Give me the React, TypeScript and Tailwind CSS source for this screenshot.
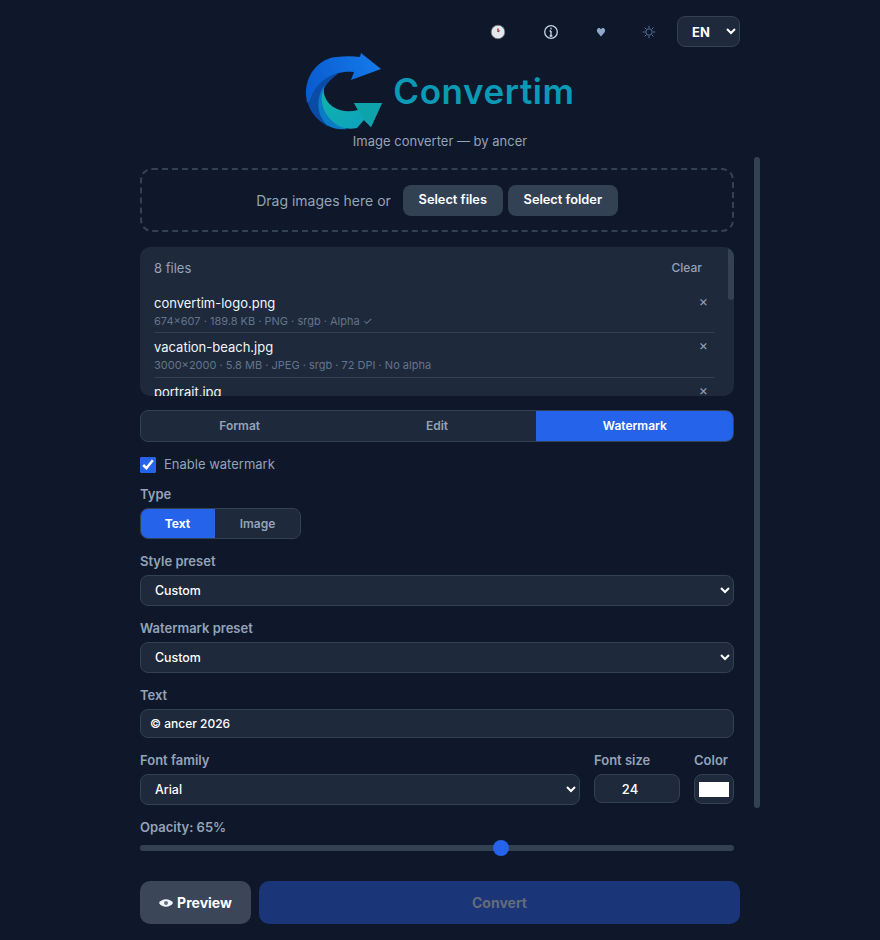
import React from "react";

const files = [
  ["convertim-logo.png", "674×607 · 189.8 KB · PNG · srgb · Alpha ✓"],
  ["vacation-beach.jpg", "3000×2000 · 5.8 MB · JPEG · srgb · 72 DPI · No alpha"],
  ["portrait.jpg", "2400×3200 · 3.1 MB · JPEG · srgb · 72 DPI · No alpha"],
  ["product-shot.png", "1600×1600 · 1.2 MB · PNG · srgb · Alpha ✓"],
  ["screenshot.png", "1920×1080 · 842.5 KB · PNG · srgb · No alpha"],
  ["banner.webp", "1200×400 · 96.4 KB · WEBP · srgb · No alpha"],
  ["icon.gif", "256×256 · 24.1 KB · GIF · srgb · Alpha ✓"],
  ["scan.tiff", "2480×3508 · 9.4 MB · TIFF · srgb · 300 DPI · No alpha"],
];

function Label({ children }: { children: React.ReactNode }) {
  return <div className="text-[13px] leading-[16px] font-semibold text-[#94a3b8]">{children}</div>;
}

function Sel({ value }: { value: string }) {
  return (
    <select
      defaultValue={value}
      className="h-[31px] w-full rounded-[8px] border border-[#334155] bg-[#1e293b] pl-[10px] pr-[6px] text-[12.4px] font-medium text-white outline-none"
    >
      <option>{value}</option>
    </select>
  );
}

function Logo() {
  return (
    <svg width="80" height="78" viewBox="0 0 80 78" className="shrink-0">
      <defs>
        <linearGradient id="a" x1="0" y1="0.6" x2="1" y2="0.3">
          <stop offset="0" stopColor="#0a5ccf" />
          <stop offset="1" stopColor="#1479ea" />
        </linearGradient>
        <linearGradient id="b" x1="0" y1="0" x2="1" y2="1">
          <stop offset="0" stopColor="#12b3a8" />
          <stop offset="1" stopColor="#0b9fc2" />
        </linearGradient>
      </defs>
      <path d="M30 20C14 24 4 34 2 45C3 55 9 66 24 74C14 62 12 46 20 34C23 29 27 25 33 21Z" fill="#0a4ba6" />
      <path d="M19 33C12 44 10 60 22 72C28 76 35 77 42 76C28 70 18 52 19 33Z" fill="#0a7cc6" />
      <path d="M1 42C0 22 14 5 32 4C40 3 48 3 55 4L56 0L76 16L46 27L49 19C32 17 12 25 5 47L2 50Z" fill="url(#a)" />
      <path d="M18 38C14 50 20 66 36 74C41 76 47 76 52 75L59 67L66 74L77 50L49 50L53 57C38 61 22 56 18 38Z" fill="url(#b)" />
      <path d="M49 50L77 50L66 74L59 67L53 57Z" fill="#0ea3ab" />
    </svg>
  );
}

export default function App() {
  return (
    <div className="flex h-[940px] flex-col overflow-hidden bg-[#0f172a] pl-[140px] font-['Inter','Liberation_Sans',sans-serif]">
      <div className="flex h-[48px] w-[600px] shrink-0 items-start justify-end pt-[16px]">
        <div className="flex h-[31px] items-center">
          <svg width="16" height="16" viewBox="0 0 16 16">
            <circle cx="8" cy="8" r="6.8" fill="#e5e7eb" />
            <circle cx="8" cy="8" r="6.8" fill="none" stroke="#6b7280" strokeWidth="0.8" />
            <path d="M8 8V4.5" stroke="#b91c3c" strokeWidth="1.4" />
            <path d="M8 8L10 6.5" stroke="#374151" strokeWidth="0.8" />
          </svg>
          <svg className="ml-[37px]" width="16" height="16" viewBox="0 0 16 16" fill="none">
            <circle cx="8" cy="8" r="6.3" stroke="#c3d4e8" strokeWidth="1.3" />
            <path d="M8 7v5M6.6 7H8M6.6 12h2.8M8 3.8v1.6" stroke="#d6e2f0" strokeWidth="1.3" />
          </svg>
          <svg className="ml-[34px]" width="16" height="10" viewBox="0 0 16 10">
            <path d="M8 9.5L4.4 5.3C3.2 3.6 4.2 1 6 1 7 1 7.6 1.6 8 2.4 8.4 1.6 9 1 10 1c1.8 0 2.8 2.6 1.6 4.3Z" fill="#8ea9cc" />
          </svg>
          <svg className="ml-[32px]" width="16" height="14" viewBox="0 0 16 14" fill="none" stroke="#58749a">
            <circle cx="8" cy="7" r="3.2" strokeWidth="1" />
            <path d="M8 .8v2M8 11.2v2M1.8 7h2M12.2 7h2M3.6 2.6L5 4M11 10l1.4 1.4M3.6 11.4L5 10M11 4l1.4-1.4" strokeWidth="1" />
          </svg>
          <select defaultValue="EN" className="ml-[20px] h-[31px] w-[63px] rounded-[8px] border border-[#334155] bg-[#1e293b] pl-[10px] text-[13px] font-bold text-white outline-none">
            <option>EN</option>
          </select>
        </div>
      </div>

      <div className="flex w-[600px] shrink-0 flex-col items-center">
        <div className="flex h-[85px] items-start pt-[5px]">
          <Logo />
          <span className="ml-[8px] mt-[16px] text-[35px] leading-[44px] font-semibold tracking-[0.6px] text-[#0a9ab6]">Convertim</span>
        </div>
        <div className="text-[13px] leading-[16px] text-[#94a3b8]">Image converter — by ancer</div>
      </div>

      <div className="relative mt-[8px] min-h-0 w-[620px] flex-1">
        <div className="h-full w-[594px] overflow-hidden pt-[11px]">
          <div className="flex h-[64px] items-center justify-center gap-[5px] rounded-[12px] border-2 border-dashed border-[#334155]">
            <span className="mr-[7px] text-[14px] text-[#94a3b8]">Drag images here or</span>
            <button className="h-[31px] w-[100px] rounded-[8px] bg-[#334155] text-[12.8px] font-semibold text-white">Select files</button>
            <button className="h-[31px] w-[110px] rounded-[8px] bg-[#334155] text-[12.8px] font-semibold text-white">Select folder</button>
          </div>

          <div className="relative mt-[15px] h-[149px] overflow-hidden rounded-[10px] bg-[#1e293b] pl-[14px]">
            <div className="w-[560px]">
              <div className="flex h-[41.5px] items-center justify-between pr-[12px] pt-[1px]">
                <span className="text-[13px] text-[#94a3b8]">8 files</span>
                <span className="text-[12px] font-medium text-[#94a3b8]">Clear</span>
              </div>
              {files.map(([name, meta], i) => (
                <div key={name} className={"relative h-[44.5px] pt-[4px] " + (i < files.length - 1 ? "border-b border-[#334155]" : "")}>
                  <div className="text-[13px] leading-[20px] font-normal text-[#f1f5f9]">{name}</div>
                  <div className="text-[11px] leading-[17px] text-[#64748b]">{meta}</div>
                  <span className="absolute right-[6px] top-[2px] text-[14px] leading-[20px] text-[#94a3b8]">×</span>
                </div>
              ))}
            </div>
            <div className="absolute right-0 top-0 h-[53px] w-[6px] rounded-[3px] bg-[#334155]" />
          </div>

          <div className="mt-[14px] grid h-[32px] grid-cols-3 overflow-hidden rounded-[8px] border border-[#334155] bg-[#1e293b]">
            <div className="flex items-center justify-center text-[12px] font-semibold text-[#94a3b8]">Format</div>
            <div className="flex items-center justify-center text-[12px] font-semibold text-[#94a3b8]">Edit</div>
            <div className="-my-px -mr-px flex items-center justify-center bg-[#2563eb] text-[12px] font-semibold text-white">Watermark</div>
          </div>

          <label className="mt-[14px] flex h-[18px] items-center gap-[8px]">
            <input type="checkbox" defaultChecked className="h-[16px] w-[16px] accent-[#2563eb]" />
            <span className="text-[13px] text-[#94a3b8]">Enable watermark</span>
          </label>

          <div className="mt-[12px]"><Label>Type</Label></div>
          <div className="mt-[6px] flex h-[31px] w-[161px] overflow-hidden rounded-[8px] border border-[#334155] bg-[#1e293b]">
            <div className="-my-px -ml-px flex w-[75px] items-center justify-center bg-[#2563eb] text-[12px] font-bold text-white">Text</div>
            <div className="flex flex-1 items-center justify-center text-[12px] font-semibold text-[#94a3b8]">Image</div>
          </div>

          <div className="mt-[14px]"><Label>Style preset</Label></div>
          <div className="mt-[6px]"><Sel value="Custom" /></div>

          <div className="mt-[14px]"><Label>Watermark preset</Label></div>
          <div className="mt-[6px]"><Sel value="Custom" /></div>

          <div className="mt-[14px]"><Label>Text</Label></div>
          <input
            defaultValue="© ancer 2026"
            className="mt-[6px] h-[29px] w-full rounded-[8px] border border-[#334155] bg-[#1e293b] px-[9px] text-[12px] font-medium text-white outline-none"
          />

          <div className="mt-[14px] flex gap-[14px]">
            <div className="w-[440px]">
              <Label>Font family</Label>
              <div className="mt-[6px]"><Sel value="Arial" /></div>
            </div>
            <div className="w-[86px]">
              <Label>Font size</Label>
              <input defaultValue="24" className="mt-[6px] h-[29px] w-full rounded-[8px] border border-[#334155] bg-[#1e293b] pr-[14px] text-center text-[13px] font-medium text-white outline-none" />
            </div>
            <div className="w-[40px]">
              <Label>Color</Label>
              <div className="mt-[6px] flex h-[30px] w-[40px] items-center justify-center rounded-[8px] border border-[#334155] bg-[#1e293b]">
                <div className="h-[15px] w-[30px] bg-white" />
              </div>
            </div>
          </div>

          <div className="mt-[14px]"><Label>Opacity: 65%</Label></div>
          <div className="relative mt-[10px] h-[6px] rounded-[3px] bg-[#334155]">
            <div className="absolute left-[353px] top-[-5px] h-[16px] w-[16px] rounded-full bg-[#2563eb]" />
          </div>
        </div>
        <div className="absolute left-[614px] top-0 h-[651px] w-[6px] rounded-[3px] bg-[#334155]" />
      </div>

      <div className="mb-[16px] mt-[12px] flex w-[600px] shrink-0 gap-[8px]">
        <button className="flex h-[43px] w-[111px] items-center justify-center gap-[4px] rounded-[10px] bg-[#3b4658] text-[14px] font-bold text-white">
          <svg width="14" height="8" viewBox="0 0 14 8"><path d="M0 4C3-1 11-1 14 4 11 9 3 9 0 4Z" fill="#f1f5f9" /><circle cx="7" cy="4" r="2" fill="#64748b" /></svg>
          Preview
        </button>
        <button className="h-[43px] flex-1 rounded-[10px] bg-[#1a3578] text-[14px] font-bold text-[#646c7c]">Convert</button>
      </div>
    </div>
  );
}
